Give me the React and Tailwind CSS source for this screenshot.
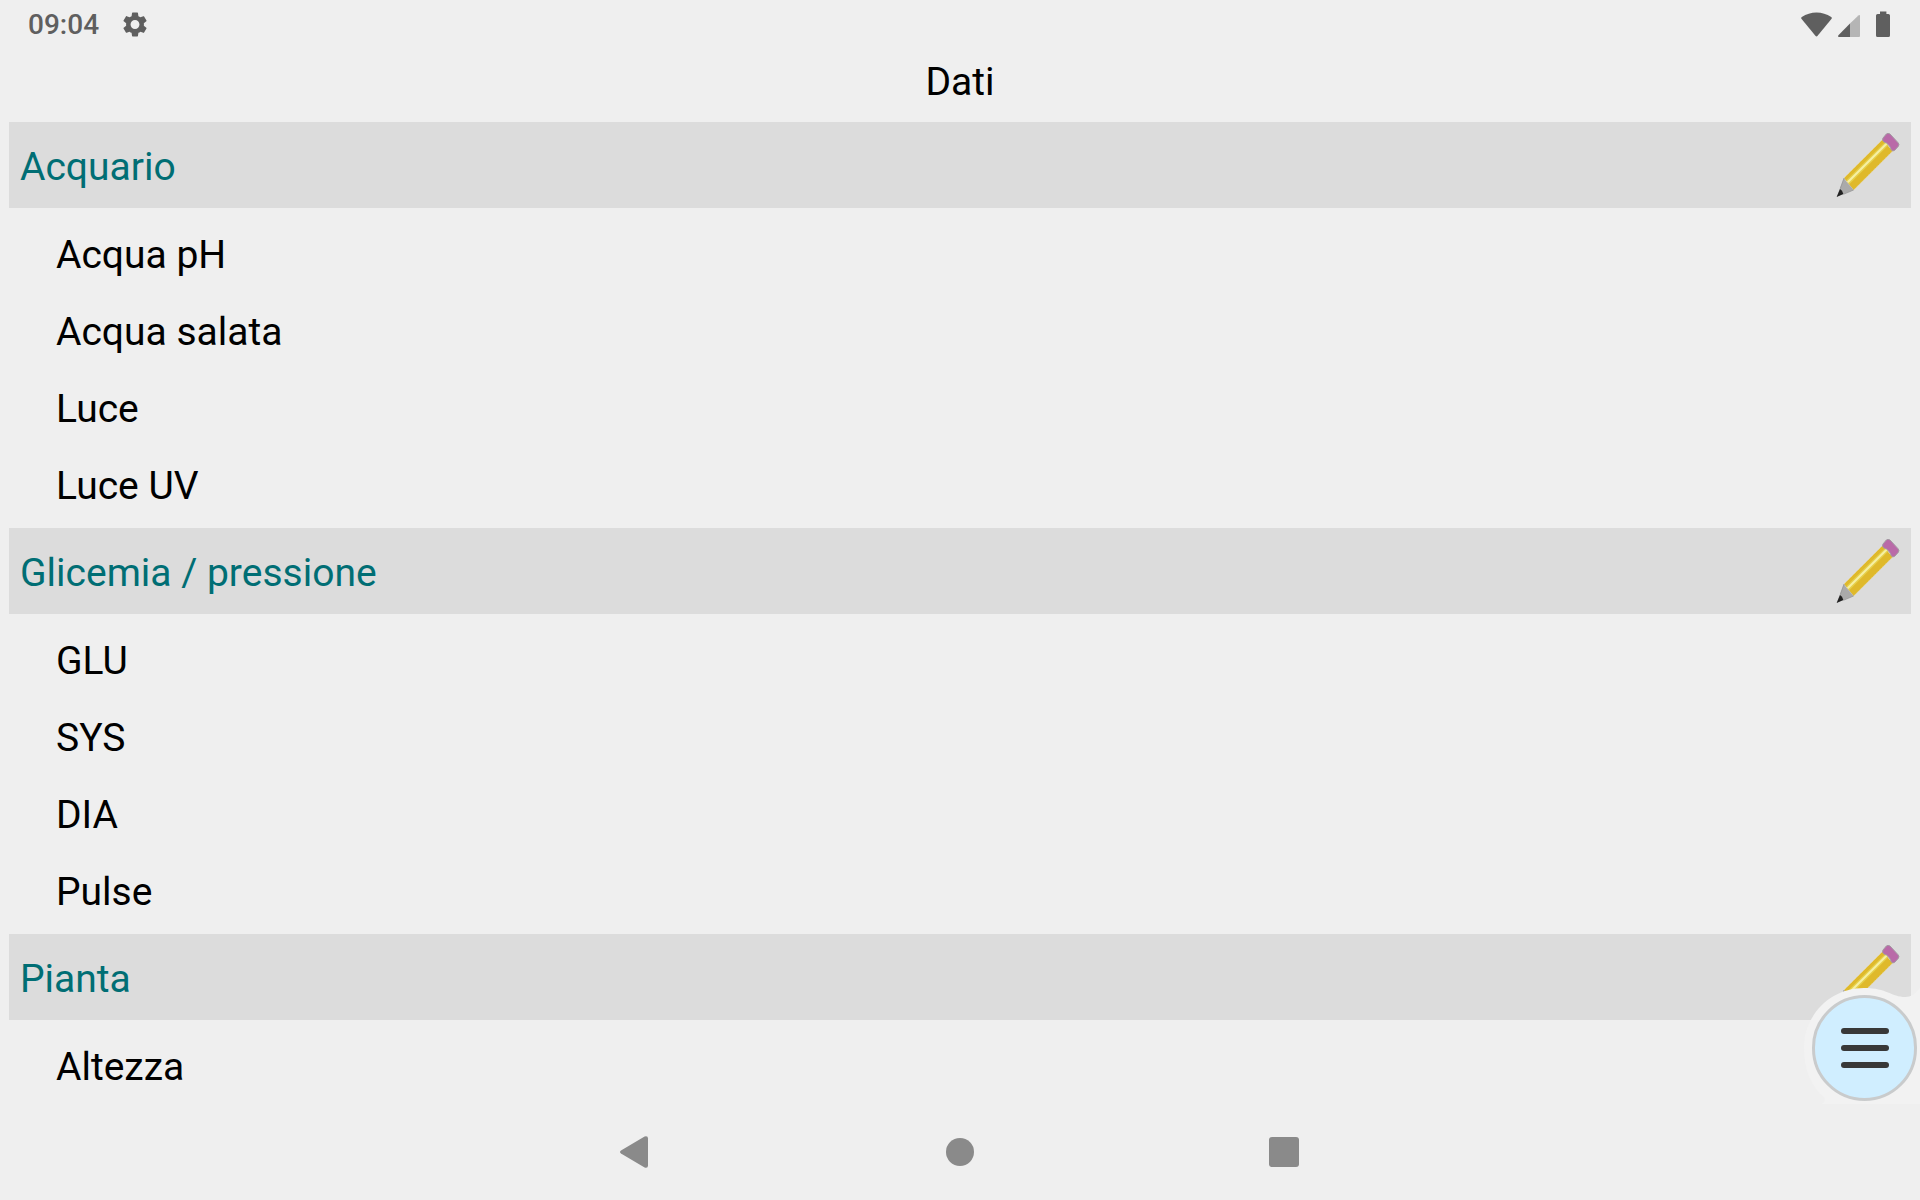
import { useState } from 'react';

const groups = [
  { name: 'Acquario', items: ['Acqua pH', 'Acqua salata', 'Luce', 'Luce UV'] },
  { name: 'Glicemia / pressione', items: ['GLU', 'SYS', 'DIA', 'Pulse'] },
  { name: 'Pianta', items: ['Altezza'] },
];

function PencilIcon() {
  return (
    <svg viewBox="0 0 192 192" className="w-16 h-16" aria-hidden="true">
      <path d="M24 135 L139 20 L170 54 L53 171 Z" fill="#dfb92b" />
      <path d="M31 142 L148 26 L157 37 L40 154 Z" fill="#e6d04a" />
      <path d="M35 148 L153 31" stroke="#f6f0a4" strokeWidth="6" />
      <path d="M24 135 L139 20 M53 171 L170 54" stroke="#f0e3ae" strokeWidth="2" strokeDasharray="3 3" />
      <path d="M24 135 Q30 146 38 154 Q46 163 53 171 L2 191 Z" fill="#aaaaaa" />
      <path d="M24 135 L13 166 M53 171 L22 184" stroke="#8f8f8f" strokeWidth="2" />
      <path d="M12 168 Q19 171 22 183 L2 192 Z" fill="#222222" />
      <path
        d="M141 15 L151 3 Q156 -1 162 3 L186 29 Q191 35 187 40 L176 52 Q170 56 166 51 Q164 42 158 36 Q152 29 144 27 Q137 22 141 15 Z"
        fill="#b96aa8"
        stroke="#a39aa2"
        strokeWidth="3"
      />
    </svg>
  );
}

function StatusBar() {
  return (
    <header className="flex items-center h-12 pl-7 pr-[30px] shrink-0 text-[#5f5f5f]">
      <time className="pt-[2px] text-[28px] leading-8 font-medium">09:04</time>
      <svg viewBox="2.3 2 19.4 20" preserveAspectRatio="none" className="w-6 h-[25px] ml-6" fill="currentColor" aria-hidden="true">
        <path d="M19.14 12.94c.04-.3.06-.61.06-.94 0-.32-.02-.64-.07-.94l2.03-1.58c.18-.14.23-.41.12-.61l-1.92-3.32c-.12-.22-.37-.29-.59-.22l-2.39.96c-.5-.38-1.03-.7-1.62-.94l-.36-2.54c-.04-.24-.24-.41-.48-.41h-3.84c-.24 0-.43.17-.47.41l-.36 2.54c-.59.24-1.13.57-1.62.94l-2.39-.96c-.22-.08-.47 0-.59.22L2.74 8.87c-.12.21-.08.47.12.61l2.03 1.58c-.05.3-.09.63-.09.94s.02.64.07.94l-2.03 1.58c-.18.14-.23.41-.12.61l1.92 3.32c.12.22.37.29.59.22l2.39-.96c.5.38 1.03.7 1.62.94l.36 2.54c.05.24.24.41.48.41h3.84c.24 0 .44-.17.47-.41l.36-2.54c.59-.24 1.13-.56 1.62-.94l2.39.96c.22.08.47 0 .59-.22l1.92-3.32c.12-.22.07-.47-.12-.61l-2.01-1.58zM12 15.6c-1.98 0-3.6-1.62-3.6-3.6s1.62-3.6 3.6-3.6 3.6 1.62 3.6 3.6-1.62 3.6-3.6 3.6z" />
      </svg>
      <div className="flex items-end ml-auto" aria-hidden="true">
        <svg viewBox="0 0 31 25" className="w-[31px] h-[25px]" fill="currentColor">
          <path d="M0.4 6.8 Q-0.2 5.8 0.8 5 Q7.5 0.4 15.5 0.4 T30.2 5 Q31.2 5.8 30.6 6.8 L16.6 23.8 Q15.5 25 14.4 23.8 Z" />
        </svg>
        <svg viewBox="0 0 22 22" className="w-[22px] h-[22px] ml-[6px]" fill="currentColor">
          <path d="M12 8.6 L20.4 0.4 Q22 -0.6 22 1 V21 Q22 22 21 22 H12 Z" fill="#b5b5b5" />
          <path d="M12 8.6 V22 H1 Q-0.6 22 0.4 20.2 Z" />
        </svg>
        <svg viewBox="0 0 14 26" className="w-[14px] h-[26px] ml-4" fill="currentColor">
          <path d="M4 0.6 H10.4 V3 H12.4 Q14 3 14 4.6 V24.4 Q14 26 12.4 26 H1.6 Q0 26 0 24.4 V4.6 Q0 3 1.6 3 H4 Z" />
        </svg>
      </div>
    </header>
  );
}

function Group({ name, items }) {
  return (
    <section>
      <div className="flex items-center justify-between h-[86px] px-[11px] bg-[#dcdcdc]">
        <h2 className="pt-1 text-[#006e74]">{name}</h2>
        <button type="button" aria-label={`Modifica ${name}`}>
          <PencilIcon />
        </button>
      </div>
      <ul className="pt-2 pb-1">
        {items.map((item) => (
          <li key={item} className="flex items-center h-[77px] pl-[47px]">
            {item}
          </li>
        ))}
      </ul>
    </section>
  );
}

function MenuButton({ onClick }) {
  return (
    <div className="absolute right-0 bottom-0">
      <svg viewBox="0 0 348 348" className="w-[116px] h-[116px]" aria-hidden="true">
        <path
          d="M52 348 Q66 342 62 330 C22 298 0 244 0 180 C0 80 80 0 180 0 C250 0 262 27 304 27 Q328 27 348 0 V348 Z"
          fill="#f2f2f2"
        />
      </svg>
      <button
        type="button"
        aria-label="Menu"
        onClick={onClick}
        className="absolute right-[3px] bottom-[3px] flex flex-col items-center justify-center gap-[11px] w-[105px] h-[106px] rounded-full border-3 border-[#c9cbcc] bg-[#d0eeff]"
      >
        <span className="w-12 h-[6px] rounded-full bg-[#383838]" />
        <span className="w-12 h-[6px] rounded-full bg-[#383838]" />
        <span className="w-12 h-[6px] rounded-full bg-[#383838]" />
      </button>
    </div>
  );
}

function NavigationBar() {
  return (
    <nav className="flex justify-center h-24 shrink-0 text-[#8a8a8a]">
      <button type="button" aria-label="Indietro" className="flex items-center justify-center w-[324px]">
        <svg viewBox="0 0 32 32" className="w-8 h-8" fill="currentColor">
          <path d="M1 14.4 L24.6 0.4 Q28 -0.6 28 2.4 V29.6 Q28 32.6 24.6 31.6 L1 17.6 Q-1 16 1 14.4 Z" />
        </svg>
      </button>
      <button type="button" aria-label="Home" className="flex items-center justify-center w-[324px]">
        <span className="w-7 h-7 rounded-full bg-current" />
      </button>
      <button type="button" aria-label="Recenti" className="flex items-center justify-center w-[324px]">
        <span className="w-[30px] h-[30px] rounded-[3px] bg-current" />
      </button>
    </nav>
  );
}

export default function App() {
  const [menuOpen, setMenuOpen] = useState(false);

  return (
    <div className="flex flex-col h-screen bg-[#efefef] text-black font-[Roboto,sans-serif]">
      <StatusBar />
      <main className="relative flex flex-col flex-1 min-h-0 text-[39px] leading-[46px]">
        <h1 className="pt-[11px] pb-[17px] text-center">Dati</h1>
        <div className="flex-1 min-h-0 px-[9px] overflow-y-auto [scrollbar-width:none]">
          {groups.map((group) => (
            <Group key={group.name} name={group.name} items={group.items} />
          ))}
        </div>
        <MenuButton onClick={() => setMenuOpen(!menuOpen)} />
      </main>
      <NavigationBar />
    </div>
  );
}
